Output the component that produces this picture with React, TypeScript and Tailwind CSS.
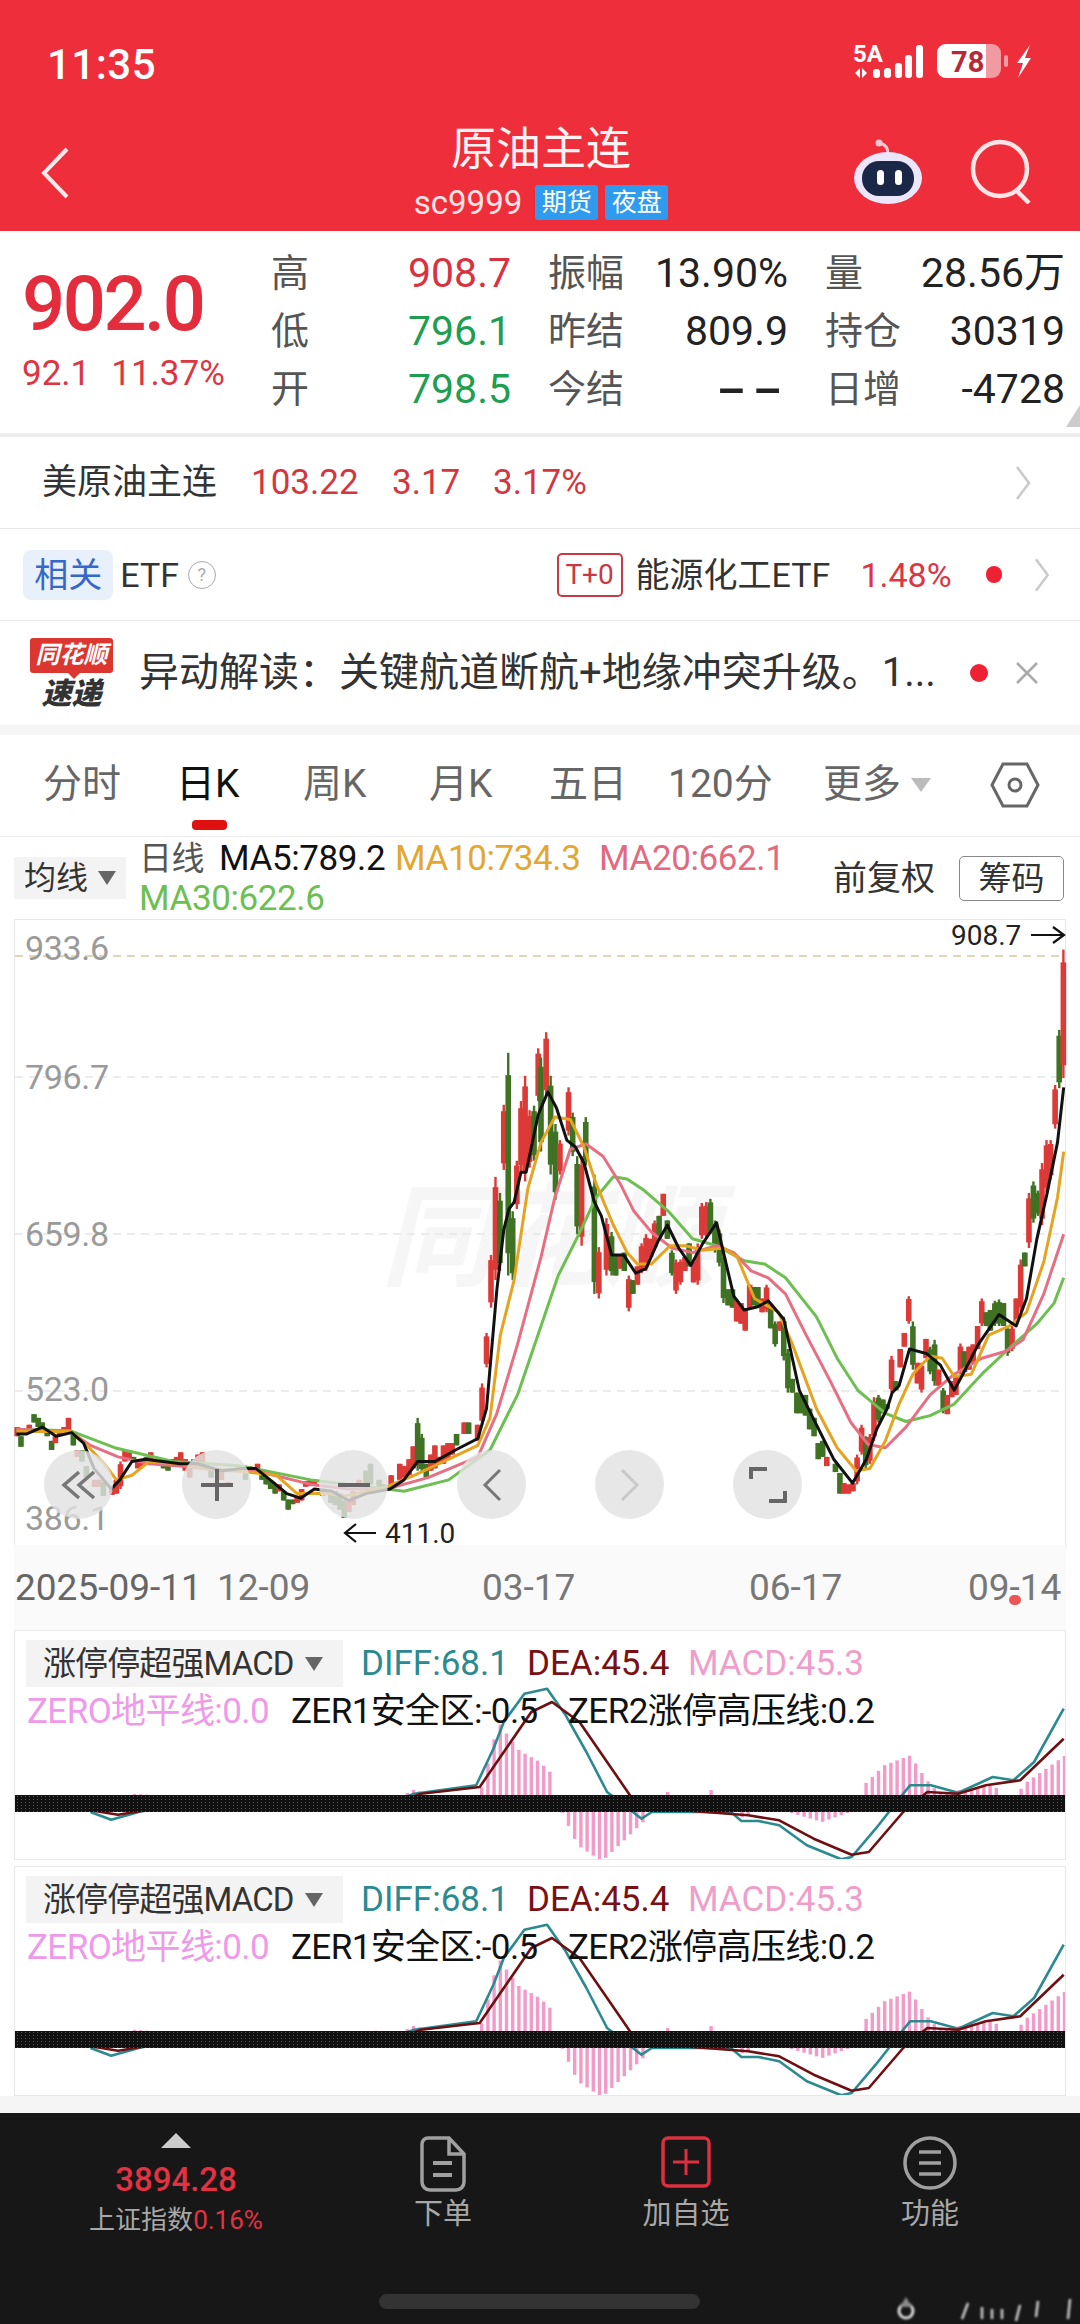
import React from "react";

type C = [number, number, number, string];
const zx3 = (x: number) => x / 2.904;
const zx4 = (x: number) => 540 + x / 2.904;
const zy = (y: number) => 920 + y / 2.178;

const c3: C[] = [[47,1100,1120,"r"],[58,1120,1143,"g"],[82,1095,1105,"r"],[96,1072,1090,"g"],[108,1080,1100,"g"],[120,1090,1105,"g"],[134,1105,1120,"g"],[147,1130,1150,"g"],[158,1120,1135,"r"],[170,1105,1120,"r"],[183,1100,1115,"r"],[196,1080,1115,"r"],[210,1115,1140,"g"],[222,1150,1165,"r"],[235,1150,1175,"g"],[248,1185,1210,"g"],[272,1215,1230,"r"],[285,1215,1230,"r"],[297,1220,1250,"g"],[322,1235,1248,"r"],[335,1215,1245,"r"],[347,1175,1235,"r"],[360,1150,1175,"r"],[372,1155,1170,"r"],[385,1165,1175,"g"],[397,1175,1190,"r"],[410,1170,1185,"r"],[422,1165,1175,"r"],[435,1155,1175,"r"],[472,1175,1190,"g"],[485,1175,1195,"g"],[498,1170,1185,"g"],[510,1165,1180,"r"],[522,1155,1175,"r"],[535,1170,1195,"r"],[548,1180,1210,"r"],[560,1170,1185,"g"],[572,1160,1180,"r"],[585,1155,1190,"r"],[610,1190,1210,"g"],[640,1195,1215,"r"],[660,1220,1230,"r"],[710,1195,1215,"g"],[722,1185,1195,"r"],[745,1180,1195,"r"],[758,1205,1215,"g"],[770,1210,1225,"g"],[783,1218,1235,"g"],[796,1225,1245,"g"],[808,1225,1240,"r"],[821,1240,1260,"g"],[834,1258,1280,"g"],[847,1258,1268,"g"],[860,1250,1265,"r"],[873,1235,1260,"r"],[885,1218,1230,"r"],[898,1215,1228,"r"],[910,1215,1225,"r"],[935,1235,1250,"g"],[958,1245,1265,"g"],[971,1240,1270,"g"],[984,1245,1280,"g"],[997,1260,1298,"g"],[1010,1260,1285,"r"],[1023,1240,1270,"r"],[1040,1215,1230,"r"],[1060,1195,1225,"g"],[1073,1180,1225,"g"],[1098,1215,1235,"g"],[1110,1225,1235,"g"],[1133,1205,1225,"r"],[1158,1180,1215,"r"],[1172,1185,1210,"r"],[1185,1170,1205,"r"],[1197,1142,1190,"r"],[1210,1080,1195,"g"],[1222,1115,1200,"g"],[1235,1180,1210,"g"],[1248,1160,1195,"r"],[1260,1140,1190,"r"],[1273,1165,1180,"r"],[1285,1140,1180,"r"],[1298,1135,1170,"r"],[1310,1135,1160,"r"],[1323,1115,1140,"g"],[1345,1090,1115,"r"],[1358,1090,1115,"g"],[1384,1095,1130,"r"],[1397,1005,1095,"r"],[1410,895,970,"r"],[1423,725,840,"r"],[1436,555,780,"r"],[1449,590,760,"g"],[1460,398,540,"r"],[1473,285,770,"g"],[1486,630,780,"g"],[1498,520,625,"r"],[1510,390,545,"r"],[1522,335,565,"r"],[1535,410,535,"r"],[1548,400,520,"g"],[1560,275,390,"r"]];
const c4: C[] = [[0,295,500,"g"],[15,240,380,"r"],[28,335,550,"g"],[42,440,605,"g"],[55,475,550,"r"],[80,360,465,"r"],[92,415,510,"g"],[105,510,680,"g"],[118,510,705,"r"],[130,425,530,"g"],[155,550,810,"g"],[168,708,820,"r"],[190,645,770,"r"],[205,675,770,"g"],[217,725,770,"g"],[230,725,755,"r"],[242,720,760,"g"],[255,770,848,"r"],[267,780,810,"g"],[280,750,790,"r"],[292,700,765,"r"],[305,680,760,"r"],[318,690,730,"r"],[330,650,715,"r"],[343,640,690,"g"],[355,592,640,"r"],[367,650,690,"g"],[380,715,770,"g"],[392,735,810,"r"],[405,735,790,"r"],[418,730,760,"r"],[430,700,750,"g"],[443,740,785,"r"],[455,700,790,"r"],[467,612,690,"r"],[480,610,690,"r"],[492,603,680,"g"],[505,650,720,"g"],[518,670,750,"g"],[530,720,830,"g"],[543,800,835,"g"],[556,800,840,"g"],[568,825,870,"r"],[581,830,875,"r"],[593,845,890,"r"],[606,790,840,"r"],[618,795,835,"g"],[630,795,840,"g"],[642,820,850,"r"],[655,790,850,"r"],[667,835,885,"g"],[680,870,925,"g"],[693,870,890,"r"],[705,860,955,"g"],[717,930,1025,"g"],[730,995,1025,"g"],[743,1025,1070,"g"],[755,1030,1070,"g"],[768,1030,1075,"g"],[780,1060,1105,"g"],[793,1080,1120,"g"],[805,1135,1170,"g"],[818,1130,1165,"g"],[830,1165,1185,"r"],[855,1180,1198,"g"],[868,1200,1245,"g"],[880,1222,1245,"r"],[893,1225,1245,"r"],[906,1222,1240,"r"],[918,1160,1225,"r"],[931,1095,1160,"r"],[943,1120,1190,"g"],[955,1115,1180,"r"],[967,1035,1130,"r"],[980,1030,1090,"g"],[993,1040,1070,"g"],[1005,1050,1060,"g"],[1018,945,1025,"r"],[1030,1000,1020,"g"],[1043,930,970,"r"],[1055,895,925,"r"],[1068,815,875,"r"],[1080,870,975,"g"],[1093,960,1005,"r"],[1105,960,1025,"r"],[1118,908,950,"r"],[1130,925,985,"g"],[1143,910,1010,"g"],[1155,975,1010,"r"],[1168,1015,1070,"g"],[1180,1030,1072,"r"],[1193,1000,1035,"r"],[1205,990,1030,"r"],[1218,918,985,"r"],[1230,935,980,"g"],[1243,925,975,"r"],[1255,920,960,"r"],[1268,880,930,"r"],[1280,820,880,"r"],[1293,850,880,"g"],[1305,845,890,"g"],[1318,825,880,"g"],[1330,822,880,"g"],[1343,830,880,"g"],[1355,880,945,"g"],[1368,880,935,"r"],[1380,820,870,"r"],[1393,735,850,"r"],[1405,720,750,"g"],[1417,590,710,"r"],[1430,565,655,"g"],[1443,585,640,"g"],[1455,525,660,"r"],[1468,475,590,"r"],[1480,475,560,"r"],[1493,355,450,"r"],[1505,235,362,"g"],[1517,60,340,"r"]];

const black3 = [[45,1115],[75,1115],[120,1100],[160,1120],[205,1112],[240,1135],[270,1190],[320,1235],[345,1215],[380,1175],[420,1170],[470,1175],[520,1180],[570,1180],[640,1195],[700,1190],[740,1190],[790,1220],[830,1245],[870,1255],[910,1235],[960,1240],[1010,1260],[1060,1245],[1130,1235],[1170,1215],[1210,1175],[1260,1175],[1320,1150],[1385,1125],[1410,1060],[1440,800],[1460,670],[1475,625],[1490,610],[1510,545],[1525,545],[1560,420]];
const black4 = [[0,405],[20,370],[45,405],[75,475],[100,490],[125,525],[155,610],[175,640],[205,725],[240,725],[275,765],[305,755],[340,695],[367,660],[400,710],[435,748],[470,700],[510,655],[530,720],[560,815],[590,845],[630,838],[660,825],[705,865],[750,1020],[800,1095],[850,1170],[905,1222],[945,1170],[975,1105],[1005,1060],[1020,1025],[1040,1010],[1070,930],[1120,940],[1160,965],[1200,1020],[1225,985],[1270,920],[1330,855],[1380,880],[1410,820],[1440,690],[1470,590],[1500,480],[1518,360]];
const orange3 = [[45,1110],[100,1110],[200,1110],[250,1140],[300,1180],[335,1215],[380,1205],[430,1175],[520,1180],[600,1190],[680,1195],[740,1200],[800,1205],[860,1245],[950,1245],[1000,1250],[1120,1230],[1200,1205],[1300,1170],[1385,1140],[1420,1080],[1450,900],[1490,780],[1530,580]];
const orange4 = [[0,480],[40,425],[85,430],[125,490],[160,570],[210,660],[250,720],[280,745],[320,745],[375,705],[420,705],[470,715],[530,710],[570,730],[620,820],[690,850],[730,920],[800,1060],[860,1145],[915,1195],[955,1190],[1000,1130],[1040,1050],[1080,985],[1130,945],[1165,950],[1200,990],[1250,985],[1300,900],[1360,880],[1410,850],[1460,740],[1500,600],[1518,500]];
const pink3 = [[45,1105],[200,1110],[260,1140],[340,1165],[430,1180],[520,1185],[640,1195],[740,1195],[900,1225],[1010,1235],[1120,1235],[1240,1210],[1385,1165],[1440,1070],[1500,920]];
const pink4 = [[0,730],[40,600],[85,495],[130,483],[180,510],[230,570],[270,630],[320,675],[380,710],[440,720],[510,705],[560,720],[610,760],[660,775],[710,810],[770,900],[840,1000],[900,1090],[950,1138],[1000,1145],[1060,1100],[1130,1030],[1200,985],[1280,950],[1350,935],[1400,910],[1460,810],[1518,680]];
const green3 = [[45,1105],[200,1108],[330,1145],[500,1175],[700,1185],[900,1215],[1120,1235],[1170,1240],[1300,1215],[1420,1150],[1500,1030]];
const green4 = [[0,880],[50,770],[110,680],[160,600],[210,555],[250,560],[300,585],[370,630],[440,690],[510,705],[590,738],[650,745],[710,775],[800,860],[860,950],[920,1020],[1000,1070],[1060,1088],[1130,1075],[1200,1050],[1280,985],[1350,935],[1440,875],[1490,830],[1518,775]];

const line = (a: number[][], b: number[][]) =>
  [...a.map(([x, y]) => `${zx3(x).toFixed(1)},${zy(y).toFixed(1)}`), ...b.map(([x, y]) => `${zx4(x).toFixed(1)},${zy(y).toFixed(1)}`)].join(" ");

const Candle = ({ x, t, b, c }: { x: number; t: number; b: number; c: string }) => {
  const top = zy(t), bot = zy(b), h = bot - top;
  const fill = c === "r" ? "#db3a36" : "#3f7222";
  const inset = h > 24 ? h * 0.1 : 0;
  return (
    <g fill={fill}>
      <rect x={x - 1.2} y={top} width={2.4} height={h} />
      <rect x={x - 2.8} y={top + inset} width={5.6} height={h - inset * 2} />
    </g>
  );
};

const KChart = () => (
  <svg viewBox="14 918 1052 640" width={1052} height={640} className="absolute left-0 top-0 overflow-visible">
    <text x={380} y={1275} fontSize={112} fontStyle="italic" fontWeight={700} fill="#f6f6f6" fontFamily="'Noto Sans CJK SC',sans-serif">同花顺</text>
    <line x1={14} x2={1064} y1={954} y2={954} stroke="#d9c9a3" strokeWidth={1.5} strokeDasharray="8 6" />
    {[1075, 1232, 1389].map((y) => (
      <line key={y} x1={14} x2={1064} y1={y} y2={y} stroke="#e6e6e6" strokeWidth={1.5} strokeDasharray="8 6" />
    ))}
    {c3.map(([x, t, b, c], i) => <Candle key={"a" + i} x={zx3(x)} t={t} b={b} c={c} />)}
    {c4.map(([x, t, b, c], i) => <Candle key={"b" + i} x={zx4(x)} t={t} b={b} c={c} />)}
    <polyline points={line(green3, green4)} fill="none" stroke="#6cbf50" strokeWidth={3} strokeLinejoin="round" />
    <polyline points={line(pink3, pink4)} fill="none" stroke="#e76f82" strokeWidth={3} strokeLinejoin="round" />
    <polyline points={line(orange3, orange4)} fill="none" stroke="#e6a31f" strokeWidth={3} strokeLinejoin="round" />
    <polyline points={line(black3, black4)} fill="none" stroke="#111111" strokeWidth={3} strokeLinejoin="round" />
    {[["933.6", 958], ["796.7", 1087], ["659.8", 1244], ["523.0", 1399], ["386.1", 1528]].map(([t, y]) => (
      <text key={t} x={24} y={y as number} fontSize={34} fill="#9a9a9a" fontFamily="Roboto,sans-serif" textLength={84}>{t}</text>
    ))}
    <text x={950} y={943} fontSize={28} fill="#222" fontFamily="Roboto,sans-serif">908.7</text>
    <path d="M1030 933H1062M1052 925L1063 933L1052 941" fill="none" stroke="#111" strokeWidth={2.2} />
    <path d="M375 1531H345M355 1522L344 1531L355 1540" fill="none" stroke="#111" strokeWidth={2.2} />
    <text x={384} y={1541} fontSize={28} fill="#222" fontFamily="Roboto,sans-serif">411.0</text>
    <line x1={14} x2={1066} y1={1544} y2={1544} stroke="#e2e2e2" strokeWidth={1.5} />
    {[262, 528, 795, 1063].map((x) => (
      <rect key={x} x={x - 1} y={1544} width={3} height={12} fill="#777" />
    ))}
  </svg>
);

const CircleBtn = ({ x, children }: { x: string; children: React.ReactNode }) => (
  <div className={`absolute top-[530px] h-[69px] w-[69px] rounded-full bg-[rgba(226,226,226,0.82)] flex items-center justify-center ${x}`}>
    {children}
  </div>
);

const tealA = [[130,570],[160,593],[200,570],[260,545],[560,545],[600,515],[690,490],[715,380],[730,300],[760,215],[793,200],[820,280],[850,390],[880,510],[905,550],[930,590],[945,570],[1060,570],[1075,597],[1100,597],[1130,610],[1170,670],[1220,712],[1235,705],[1270,620],[1310,515],[1320,490],[1350,490],[1390,512],[1440,465],[1470,475],[1500,420],[1543,260]];
const deaA = [[130,565],[170,578],[210,565],[300,545],[570,545],[610,515],[695,495],[730,390],[770,270],[800,240],[840,300],[880,420],[920,540],[960,560],[1085,580],[1130,595],[1180,650],[1235,698],[1260,690],[1310,570],[1345,510],[1390,515],[1430,490],[1480,475],[1543,350]];
const env = [[20,545],[170,545],[185,515],[230,520],[245,545],[520,545],[535,518],[580,520],[600,500],[620,530],[690,545],[695,500],[720,300],[735,345],[750,385],[780,420],[795,450],[800,520],[806,545],[812,570],[835,670],[870,718],[900,660],[930,600],[942,545],[955,545],[965,508],[975,545],[1015,545],[1030,500],[1040,545],[1060,545],[1075,590],[1100,560],[1140,570],[1190,600],[1230,570],[1242,545],[1250,490],[1280,430],[1318,400],[1340,470],[1360,515],[1400,500],[1440,490],[1455,530],[1475,530],[1480,490],[1543,400]];
const envAt = (x: number) => {
  for (let i = 0; i < env.length - 1; i++) {
    const [a, b] = env[i], [c, d] = env[i + 1];
    if (x >= a && x <= c) return b + ((d - b) * (x - a)) / (c - a);
  }
  return 545;
};
const mp = (a: number[][]) => a.map(([x, y]) => `${(x / 1.452).toFixed(1)},${(1620 + y / 3).toFixed(1)}`).join(" ");
const bars = Array.from({ length: 170 }, (_, i) => 14 + i * 6.2);

const MacdPanel = ({ id }: { id: string }) => (
  <div className="relative ml-[14px] h-[230px] w-[1052px] border border-[#e8e8e8] bg-white overflow-hidden">
    <svg viewBox="14 1629 1052 230" width={1052} height={230} className="absolute left-0 top-0">
      <defs>
        <pattern id={id} width={4} height={3} patternUnits="userSpaceOnUse">
          <rect width={4} height={3} fill="#111" />
          <rect width={1} height={1} fill="#555" />
        </pattern>
      </defs>
      {bars.map((x) => {
        const y = envAt(x * 1.452);
        const fy = 1620 + y / 3;
        return Math.abs(y - 545) < 2 ? null : (
          <rect key={x} x={x} y={Math.min(fy, 1801)} width={3.4} height={Math.abs(fy - 1801)} fill="#f29ac9" />
        );
      })}
      <polyline points={mp(tealA)} fill="none" stroke="#2a8a90" strokeWidth={2.6} strokeLinejoin="round" />
      <polyline points={mp(deaA)} fill="none" stroke="#6e0f12" strokeWidth={2.6} strokeLinejoin="round" />
      <rect x={14} y={1793} width={1052} height={17} fill={`url(#${id})`} />
    </svg>
    <div className="relative flex flex-col pl-[11px] pt-[9px]">
      <div className="flex h-[47px] items-center leading-none">
        <div className="flex h-[47px] w-[317px] items-center bg-[#f3f3f3] pl-[17px] text-[33px] text-[#333]">
          <span className="w-[262px] whitespace-nowrap tracking-[-0.9px]">涨停停超强MACD</span>
          <span className="h-0 w-0 border-x-[9px] border-t-[14px] border-x-transparent border-t-[#666]" />
        </div>
        <span className="ml-[18px] w-[166px] whitespace-nowrap text-[35px] text-[#2a8a90]">DIFF:68.1</span>
        <span className="w-[161px] whitespace-nowrap text-[35px] text-[#7a1014]">DEA:45.4</span>
        <span className="whitespace-nowrap text-[35px] text-[#ef9ec9]">MACD:45.3</span>
      </div>
      <div className="mt-[1px] flex h-[46px] items-center whitespace-nowrap text-[35px] leading-none tracking-[-0.6px]">
        <span className="ml-[1px] w-[264px] text-[#ee9ae8]">ZERO地平线:0.0</span>
        <span className="w-[277px] text-[#111]">ZER1安全区:-0.5</span>
        <span className="text-[#111]">ZER2涨停高压线:0.2</span>
      </div>
    </div>
  </div>
);

const Chev = ({ cls }: { cls: string }) => (
  <svg width={18} height={36} viewBox="0 0 18 36" className={cls}>
    <path d="M3 2L15 18L3 34" fill="none" stroke="#c9c9c9" strokeWidth={2.5} />
  </svg>
);

const Row = ({ a, av, ac, b, bv, bc, c, cv }: { a: string; av: string; ac: string; b: string; bv: string; bc?: string; c: string; cv: string }) => (
  <div className="flex h-[58px] items-center text-[41px] leading-none whitespace-nowrap">
    <span className="w-[38px] text-[38px] text-[#555]">{a}</span>
    <span className={`w-[202px] text-right ${ac}`}>{av}</span>
    <span className="ml-[37px] w-[78px] text-[38px] text-[#555]">{b}</span>
    <span className={`w-[162px] text-right text-[#222] ${bc ?? ""}`}>{bv}</span>
    <span className="ml-[37px] w-[78px] text-[38px] text-[#555]">{c}</span>
    <span className="w-[162px] text-right text-[#222]">{cv}</span>
  </div>
);

export default function App() {
  return (
    <div className="relative flex h-[2324px] w-[1080px] flex-col overflow-hidden bg-white font-['Roboto','Noto_Sans_CJK_SC',sans-serif]">
      {/* Header */}
      <header className="h-[231px] bg-[#ee2f3b] text-white">
        <div className="flex h-[124px] items-center justify-between pl-[47px] pr-[48px]">
          <span className="mt-[5px] text-[42px] font-medium leading-none tracking-[0.5px]">11:35</span>
          <svg width={180} height={50} viewBox="852 35 180 50" className="mb-[10px]">
            <text x={853} y={65} fontSize={24} fontWeight={700} fill="#fff" fontFamily="Roboto,sans-serif">5A</text>
            <path d="M855 76L860 71V81ZM862 71L867 76L862 81Z" fill="#fff" />
            {[[873, 72, 9], [884, 71, 10], [895, 66, 15], [905, 58, 23], [916, 48, 33]].map(([x, y, h]) => (
              <rect key={x} x={x} y={y} width={7} height={h} rx={3} fill="#fff" />
            ))}
            <rect x={937} y={47} width={64} height={34} rx={9} fill="#f29aa1" />
            <path d="M946 47H986V81H946A9 9 0 0 1 937 72V56A9 9 0 0 1 946 47Z" fill="#fff" />
            <text x={951} y={75} fontSize={29} fontWeight={700} fill="#b42a36" fontFamily="Roboto,sans-serif">78</text>
            <rect x={1004} y={58} width={4} height={12} rx={2} fill="#f29aa1" />
            <path d="M1030 48L1017 66H1023L1018 81L1031 61H1025Z" fill="#fff" />
          </svg>
        </div>
        <div className="flex h-[107px] items-start pl-[40px] pr-[47px]">
          <svg width={30} height={52} viewBox="0 0 30 52" className="mt-[23px]">
            <path d="M27 2L4 26L27 50" fill="none" stroke="#ffe9ea" strokeWidth={4} />
          </svg>
          <div className="ml-[341px] flex w-[260px] flex-col items-center">
            <span className="h-[54px] text-[45px] leading-[52px] text-[#fff2f2]">原油主连</span>
            <div className="mt-[7px] flex items-center whitespace-nowrap">
              <span className="mr-[13px] text-[33px] leading-none text-[#ffe3e4]">sc9999</span>
              <span className="mr-[7px] flex h-[35px] w-[63px] items-center justify-center rounded-[3px] bg-[#2f9bee] text-[25px] leading-none">期货</span>
              <span className="flex h-[35px] w-[63px] items-center justify-center rounded-[3px] bg-[#2f9bee] text-[25px] leading-none">夜盘</span>
            </div>
          </div>
          <div className="ml-auto mt-[14px] flex items-center gap-[45px]">
            <svg width={72} height={66} viewBox="0 0 72 66">
              <path d="M36 16C36 8 32 6 28 5" fill="none" stroke="#f7c9d2" strokeWidth={3} />
              <circle cx={27} cy={5} r={3.5} fill="#f7c9d2" />
              <ellipse cx={36} cy={40} rx={34} ry={26} fill="#ece6fb" />
              <rect x={10} y={23} width={52} height={35} rx={17} fill="#1b2746" />
              <rect x={25} y={32} width={7} height={15} rx={3.5} fill="#fff" />
              <rect x={43} y={32} width={7} height={15} rx={3.5} fill="#fff" />
            </svg>
            <svg width={64} height={66} viewBox="0 0 64 66">
              <circle cx={31} cy={31} r={27} fill="none" stroke="#ffe5e6" strokeWidth={4.5} />
              <path d="M47 52L60 65" fill="none" stroke="#ffe5e6" strokeWidth={4.5} />
            </svg>
          </div>
        </div>
      </header>

      {/* Quote */}
      <section className="flex h-[206px] border-b-[4px] border-[#eeeeee] pt-[13px]">
        <div className="w-[271px] pl-[22px]">
          <div className="mt-[18px] text-[76px] font-medium leading-[84px] tracking-[-2.5px] text-[#e32c3c]">902.0</div>
          <div className="mt-[10px] flex gap-[21px] text-[35px] leading-none text-[#dc3643]">
            <span>92.1</span>
            <span>11.37%</span>
          </div>
        </div>
        <div className="relative flex-1">
          <Row a="高" av="908.7" ac="text-[#d9323f]" b="振幅" bv="13.90%" c="量" cv="28.56万" />
          <Row a="低" av="796.1" ac="text-[#1f9d50]" b="昨结" bv="809.9" c="持仓" cv="30319" />
          <Row a="开" av="798.5" ac="text-[#1f9d50]" b="今结" bv="--" bc="origin-right scale-x-[2] font-bold tracking-[2px]" c="日增" cv="-4728" />
          <span className="absolute bottom-[6px] right-[0px] h-0 w-0 border-b-[22px] border-l-[14px] border-b-[#cccccc] border-l-transparent" />
        </div>
      </section>

      {/* US crude */}
      <div className="flex h-[92px] items-center border-b border-[#e8e8e8] pl-[42px] pr-[48px] text-[35px] leading-none">
        <span className="w-[209px] text-[#333]">美原油主连</span>
        <span className="w-[141px] text-[#d3363f]">103.22</span>
        <span className="w-[101px] text-[#d3363f]">3.17</span>
        <span className="text-[#d3363f]">3.17%</span>
        <Chev cls="ml-auto" />
      </div>

      {/* ETF */}
      <div className="flex h-[92px] items-center border-b border-[#e8e8e8] pl-[23px] pr-[29px] text-[34px] leading-none">
        <span className="flex h-[50px] w-[92px] items-center justify-center rounded-[8px] bg-[#e8f0fb] text-[#3568c8]">相关</span>
        <span className="ml-[7px] text-[#333]">ETF</span>
        <span className="ml-[9px] flex h-[28px] w-[28px] items-center justify-center rounded-full border-[1.5px] border-[#aaa] text-[18px] text-[#aaa]">?</span>
        <span className="ml-[341px] flex h-[44px] w-[67px] items-center justify-center rounded-[5px] border-2 border-[#c73a45] text-[28px] text-[#c73a45]">T+0</span>
        <span className="ml-[13px] w-[229px] whitespace-nowrap text-[#333]">能源化工ETF</span>
        <span className="text-[#dc3643]">1.48%</span>
        <span className="ml-[34px] h-[17px] w-[17px] rounded-full bg-[#ee2233]" />
        <Chev cls="ml-[31px]" />
      </div>

      {/* Alert */}
      <div className="flex h-[104px] items-center pl-[30px] pr-[40px]">
        <div className="flex w-[83px] flex-col items-center leading-none">
          <div className="relative flex h-[35px] w-[83px] items-center justify-center rounded-[3px] bg-[#dc3630] text-[24px] font-bold italic text-white whitespace-nowrap">
            同花顺
            <span className="absolute -bottom-[6px] left-[38px] h-0 w-0 border-x-[6px] border-t-[6px] border-x-transparent border-t-[#dc3630]" />
          </div>
          <div className="mt-[6px] text-[30px] font-black italic text-[#333]">速递</div>
        </div>
        <span className="ml-[26px] w-[812px] whitespace-nowrap text-[40px] leading-none text-[#333]">异动解读：关键航道断航+地缘冲突升级。1...</span>
        <span className="ml-[19px] h-[18px] w-[18px] rounded-full bg-[#ee2233]" />
        <svg width={24} height={24} viewBox="0 0 24 24" className="ml-[27px]">
          <path d="M2 2L22 22M22 2L2 22" stroke="#aaa" strokeWidth={2.5} />
        </svg>
      </div>
      <div className="h-[10px] bg-[#f5f5f5]" />

      {/* Tabs */}
      <nav className="relative flex h-[102px] items-center border-b border-[#ececec] pb-[2px] text-[39px] leading-none text-[#666] whitespace-nowrap">
        <span className="ml-[43px] w-[133px]">分时</span>
        <span className="w-[127px] text-[#111]">日K</span>
        <span className="w-[126px]">周K</span>
        <span className="w-[120px]">月K</span>
        <span className="w-[119px]">五日</span>
        <span className="w-[155px]">120分</span>
        <span>更多</span>
        <span className="ml-[10px] h-0 w-0 border-x-[10px] border-t-[14px] border-x-transparent border-t-[#bbb]" />
        <svg width={50} height={46} viewBox="0 0 50 46" className="ml-[59px]">
          <path d="M13 2H37L48 23L37 44H13L2 23Z" fill="none" stroke="#666" strokeWidth={3} />
          <circle cx={25} cy={23} r={6} fill="none" stroke="#666" strokeWidth={3} />
        </svg>
        <span className="absolute bottom-[6px] left-[192px] h-[10px] w-[35px] rounded-[4px] bg-[#e01010]" />
      </nav>

      {/* MA row */}
      <div className="flex h-[82px] items-center leading-none">
        <div className="ml-[14px] flex h-[42px] w-[112px] items-center bg-[#f3f3f3] pl-[10px] text-[32px] text-[#333]">
          均线
          <span className="ml-[10px] h-0 w-0 border-x-[9px] border-t-[14px] border-x-transparent border-t-[#666]" />
        </div>
        <div className="ml-[13px] flex w-[670px] flex-col gap-[4px] whitespace-nowrap text-[35px] tracking-[-0.4px]">
          <div className="flex h-[38px] items-center">
            <span className="w-[80px] text-[33px] text-[#555]">日线</span>
            <span className="w-[176px] text-[#111]">MA5:789.2</span>
            <span className="w-[204px] text-[#e3a72f]">MA10:734.3</span>
            <span className="text-[#e26a7e]">MA20:662.1</span>
          </div>
          <span className="h-[36px] text-[#6cbf50]">MA30:622.6</span>
        </div>
        <span className="ml-[24px] w-[126px] text-[34px] text-[#333]">前复权</span>
        <span className="flex h-[45px] w-[105px] items-center justify-center rounded-[5px] border border-[#888] text-[33px] text-[#333]">筹码</span>
      </div>

      {/* K chart */}
      <div className="relative ml-[14px] h-[626px] w-[1052px] border-x border-t border-[#e8e8e8]">
        <KChart />
        <CircleBtn x="left-[29px]">
          <svg width={36} height={30} viewBox="0 0 36 30"><path d="M18 2L3 15L18 28M33 2L18 15L33 28" fill="none" stroke="#777" strokeWidth={3.5} /></svg>
        </CircleBtn>
        <CircleBtn x="left-[167px]">
          <svg width={34} height={34} viewBox="0 0 34 34"><path d="M17 1V33M1 17H33" stroke="#666" strokeWidth={4} /></svg>
        </CircleBtn>
        <CircleBtn x="left-[304px]">
          <svg width={34} height={6} viewBox="0 0 34 6"><path d="M1 3H33" stroke="#666" strokeWidth={4} /></svg>
        </CircleBtn>
        <CircleBtn x="left-[442px]">
          <svg width={20} height={34} viewBox="0 0 20 34"><path d="M18 2L3 17L18 32" fill="none" stroke="#777" strokeWidth={3} /></svg>
        </CircleBtn>
        <CircleBtn x="left-[580px]">
          <svg width={20} height={34} viewBox="0 0 20 34"><path d="M2 2L17 17L2 32" fill="none" stroke="#c9c9c9" strokeWidth={3} /></svg>
        </CircleBtn>
        <CircleBtn x="left-[718px]">
          <svg width={38} height={36} viewBox="0 0 38 36"><path d="M2 12V2H18M36 24V34H20" fill="none" stroke="#666" strokeWidth={4} /></svg>
        </CircleBtn>
      </div>

      {/* Dates */}
      <div className="relative ml-[14px] flex h-[85px] w-[1052px] items-start bg-[#fafafa] pt-[24px] text-[37px] leading-none text-[#777] whitespace-nowrap">
        <span className="ml-[1px] w-[202px] text-[#666]">2025-09-11</span>
        <span className="w-[265px]">12-09</span>
        <span className="w-[267px]">03-17</span>
        <span className="w-[219px]">06-17</span>
        <span>09-14</span>
        <span className="absolute left-[995px] top-[50px] h-[10px] w-[12px] rounded-full bg-[#ee5555]" />
      </div>

      {/* MACD */}
      <MacdPanel id="dots-a" />
      <div className="h-[6px]" />
      <MacdPanel id="dots-b" />
      <div className="h-[17px] bg-[#f5f5f5]" />

      {/* Bottom nav */}
      <footer className="relative flex flex-1 items-start bg-[#171717] text-[#a8a8a8]">
        <div className="flex w-[352px] flex-col items-center pt-[20px]">
          <span className="h-0 w-0 border-x-[15px] border-b-[15px] border-x-transparent border-b-[#cccccc]" />
          <span className="mt-[15px] text-[33px] font-medium leading-none text-[#e33242]">3894.28</span>
          <span className="mt-[11px] whitespace-nowrap text-[26px] leading-none">上证指数<span className="text-[#e33242]">0.16%</span></span>
        </div>
        <div className="flex w-[182px] flex-col items-center pt-[23px]">
          <svg width={46} height={56} viewBox="0 0 46 56">
            <path d="M8 2H29L44 18V46A8 8 0 0 1 36 54H10A8 8 0 0 1 2 46V8A6 6 0 0 1 8 2ZM29 2V18H44" fill="none" stroke="#a0a0a0" strokeWidth={3.5} />
            <path d="M13 27H32M13 39H32" stroke="#a0a0a0" strokeWidth={4} />
          </svg>
          <span className="mt-[8px] text-[29px] leading-none">下单</span>
        </div>
        <div className="flex w-[304px] flex-col items-center pt-[23px]">
          <svg width={50} height={52} viewBox="0 0 50 52">
            <rect x={2} y={2} width={46} height={48} rx={5} fill="none" stroke="#dc3040" strokeWidth={3.5} />
            <path d="M25 13V39M12 26H38" stroke="#dc3040" strokeWidth={3} />
          </svg>
          <span className="mt-[12px] text-[29px] leading-none">加自选</span>
        </div>
        <div className="flex w-[184px] flex-col items-center pt-[23px]">
          <svg width={54} height={54} viewBox="0 0 54 54">
            <circle cx={27} cy={27} r={25} fill="none" stroke="#a0a0a0" strokeWidth={3.5} />
            <path d="M16 16H38M16 27H38M16 38H38" stroke="#a0a0a0" strokeWidth={3.5} />
          </svg>
          <span className="mt-[10px] text-[29px] leading-none">功能</span>
        </div>
        <span className="absolute left-[379px] top-[181px] h-[15px] w-[321px] rounded-full bg-[#333333]" />
        <svg width={190} height={34} viewBox="0 0 190 34" className="absolute left-[888px] top-[176px] blur-[1px]">
          <circle cx={18} cy={22} r={7} fill="none" stroke="#ddd" strokeWidth={3} />
          <path d="M18 8L24 18H12Z" fill="#888" />
          <path d="M80 14L74 30M94 18V30M104 20V30M114 20V30M132 16L128 32M150 12L148 28M182 10L180 30" stroke="#cfcfcf" strokeWidth={2.5} />
        </svg>
      </footer>
    </div>
  );
}
